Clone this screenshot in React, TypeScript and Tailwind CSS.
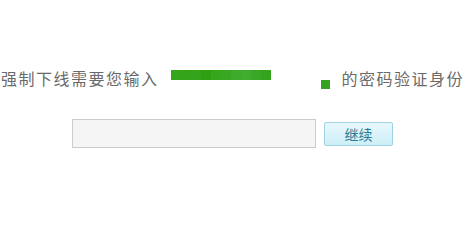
import React from 'react';

const blocks = ['#36a51e', '#34a31a', '#35a41c', '#2e9f10', '#37a61f', '#3aa724', '#3ea92b', '#42ac31', '#3aa726', '#34a41c'];

export default function App() {
  return (
    <div className="w-[468px] h-[229px] bg-white overflow-hidden font-['Noto_Sans_CJK_SC','Noto_Sans',sans-serif]">
      <div className="pt-[68px] pl-[1px] flex items-start h-[88px] whitespace-nowrap text-[16px] leading-[20px] tracking-[1.5px] text-[#6a6a6a]">
        <span>强制下线需要您输入</span>
        <div className="w-[183px] shrink-0 flex flex-col">
          <div className="ml-[12px] mt-[2px] flex h-[10px]">
            {blocks.map((c, i) => (
              <div key={i} className="w-[10px] h-[10px]" style={{ backgroundColor: c }} />
            ))}
          </div>
          <div className="ml-[162px] w-[9px] h-[9px] bg-[#33a31d]" />
        </div>
        <span>的密码验证身份</span>
      </div>
      <div className="mt-[31px] pl-[72px] flex items-center gap-[8px]">
        <input
          type="text"
          className="w-[244px] h-[29px] border border-[#cccccc] bg-[#f5f5f5] outline-none"
        />
        <button className="w-[69px] h-[24px] rounded-[2px] border border-[#9fd3e3] bg-gradient-to-b from-[#e8f8fc] to-[#cdeef7] text-[14px] leading-none text-[#2a7d96]">
          继续
        </button>
      </div>
    </div>
  );
}
